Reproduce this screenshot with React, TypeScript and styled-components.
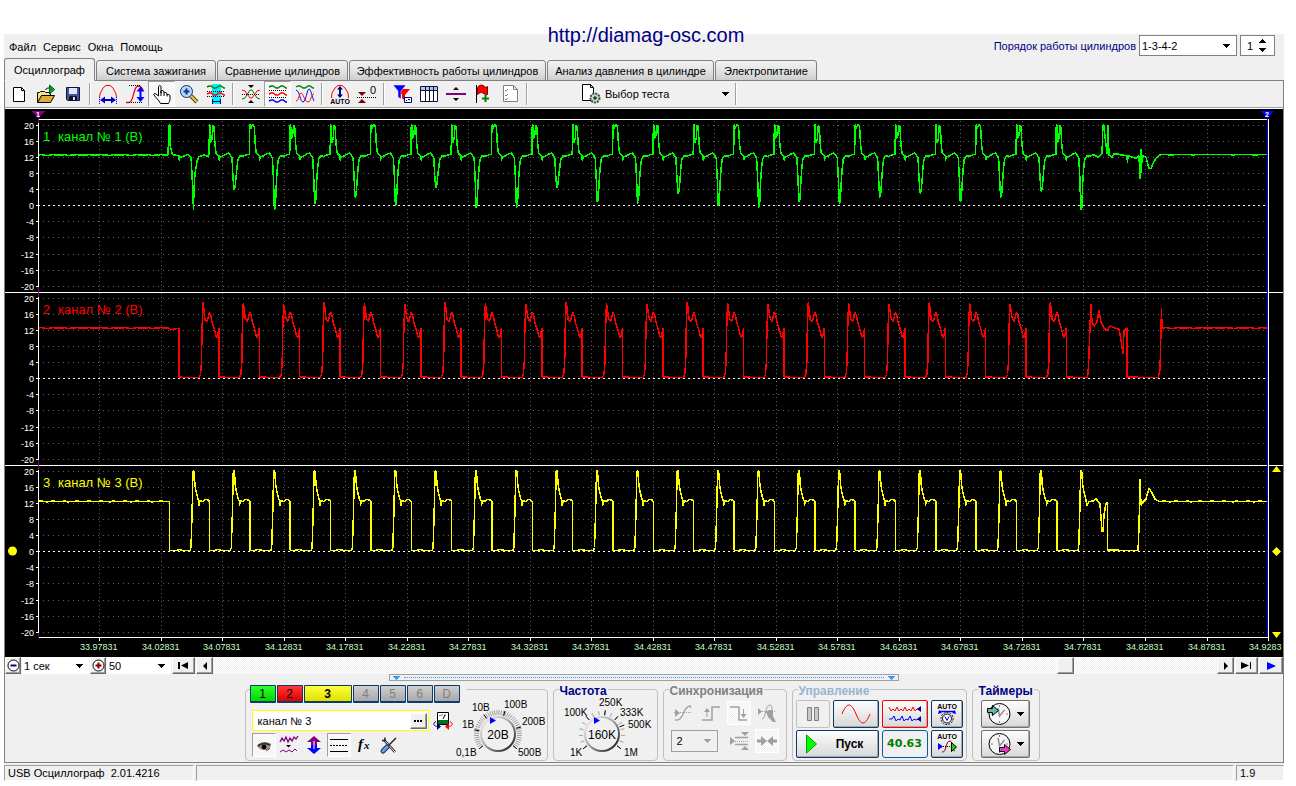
import React from "react";
import styled, { createGlobalStyle, css } from "styled-components";

const GlobalStyle = createGlobalStyle`
  * { box-sizing: border-box; }
  body {
    margin: 0;
    background: #fff;
    color: #000;
    font: 11px/14px "Liberation Sans", Arial, sans-serif;
  }
  button, input, select { font: inherit; color: inherit; margin: 0; padding: 0; }
  svg { display: block; flex: none; }
`;

const dither = "repeating-conic-gradient(#fff 0 25%, #f0f0f0 0 50%) 0 0 / 2px 2px";

/* ---------- page frame ---------- */

const Page = styled.div`
  position: relative;
  padding: 34px 12px 5px 4px;
`;

const SiteLink = styled.a`
  position: absolute;
  top: 23px;
  left: 0;
  right: 4px;
  text-align: center;
  font-size: 20px;
  line-height: 24px;
  color: #000080;
  text-decoration: none;
  pointer-events: none;
`;

const Window = styled.main`
  background: #f0f0f0;
`;

const MenuBar = styled.header`
  display: flex;
  align-items: flex-start;
  justify-content: space-between;
  height: 24px;
  padding: 1px 9px 0 5px;
`;

const Menu = styled.nav`
  display: flex;
  gap: 7px;
  padding-top: 5px;
`;

const MenuItem = styled.button`
  border: 0;
  background: none;
`;

const Order = styled.div`
  display: flex;
  align-items: center;
  gap: 3px;
`;

const OrderLabel = styled.label`
  color: #000080;
`;

/* ---------- select with drawn arrow ---------- */

const SelectBox = styled.span<{ $w: number; $h: number; $framed?: boolean; $muted?: boolean }>`
  display: flex;
  align-items: center;
  width: ${(p) => p.$w}px;
  height: ${(p) => p.$h}px;
  padding-right: 6px;
  background: ${(p) => (p.$muted ? "#f0f0f0" : "#fff")};
  border: ${(p) => (p.$framed ? `1px solid ${p.$muted ? "#a0a0a0" : "#808080"}` : "0")};
  select {
    flex: 1;
    min-width: 0;
    height: 100%;
    padding-left: ${(p) => (p.$muted ? 5 : 2)}px;
    border: 0;
    background: none;
    appearance: none;
  }
`;

const Spinner = styled.div`
  display: flex;
  width: 35px;
  height: 21px;
  border: 1px solid #808080;
  background: #fff;
  input {
    width: 18px;
    border: 0;
    background: none;
    text-align: center;
  }
`;

const SpinButtons = styled.div`
  display: flex;
  flex-direction: column;
  justify-content: center;
  gap: 4px;
  width: 13px;
  button { display: block; border: 0; background: none; height: 5px; }
`;

/* ---------- tabs ---------- */

const Tabs = styled.div`
  display: flex;
  align-items: flex-end;
  gap: 1px;
  height: 23px;
  background: linear-gradient(#808080, #808080) bottom / 100% 1px no-repeat;
`;

const Tab = styled.button<{ $w: number; $active?: boolean }>`
  width: ${(p) => p.$w}px;
  height: ${(p) => (p.$active ? 23 : 21)}px;
  border: 1px solid #808080;
  border-bottom-color: ${(p) => (p.$active ? "#f0f0f0" : "#808080")};
  border-radius: 3px 3px 0 0;
  background: ${(p) => (p.$active ? "#f0f0f0" : "linear-gradient(#f2f2f2, #e4e4e4 50%, #cdcdcd)")};
  white-space: nowrap;
`;

const Frame = styled.section`
  border: 1px solid #808080;
  border-top: 0;
`;

const Toolbar = styled.div`
  display: flex;
  height: 28px;
  border-bottom: 1px solid #fff;
  box-shadow: inset 0 -1px #a0a0a0;
`;

const ToolButton = styled.button<{ $pressed?: boolean; $size?: number }>`
  display: flex;
  align-items: center;
  justify-content: center;
  width: ${(p) => p.$size ?? 27}px;
  height: ${(p) => (p.$size ? 24 : 26)}px;
  border: 0;
  background: none;
  ${(p) =>
    p.$pressed &&
    css`
      background: ${dither};
      border: 1px solid;
      border-color: #a0a0a0 #fff #fff #a0a0a0;
      &:disabled { border-color: #fff; }
    `}
`;

const Separator = styled.span`
  width: 8px;
  height: 22px;
  margin-top: 2px;
  background: linear-gradient(90deg, #a0a0a0 1px, #fff 1px) 3px 0 / 2px 100% no-repeat;
`;

const TestButton = styled.button`
  display: flex;
  align-items: center;
  gap: 4px;
  width: 201px;
  height: 26px;
  padding: 0 0 0 50px;
  border: 0;
  background: none;
  span { flex: 0 0 113px; text-align: left; }
`;

const ScopeSvg = styled.svg`
  width: 100%;
  height: auto;
  background: #000;
`;

/* ---------- time navigation ---------- */

const NavRow = styled.div`
  display: flex;
  gap: 1px;
  height: 17px;
`;

const NavButton = styled.button<{ $w: number }>`
  display: flex;
  flex: none;
  align-items: center;
  justify-content: center;
  width: ${(p) => p.$w}px;
  border: 1px solid;
  border-color: #fff #696969 #696969 #fff;
  box-shadow: inset -1px -1px #a0a0a0;
  background: #f0f0f0;
`;

const Track = styled.div`
  flex: 1;
  display: flex;
  justify-content: flex-end;
  padding-right: 142px;
  background: ${dither};
`;

const SplitterRow = styled.div`
  display: flex;
  justify-content: center;
`;

const Splitter = styled.button`
  display: flex;
  align-items: center;
  justify-content: space-between;
  width: 510px;
  height: 7px;
  padding: 0 3px;
  border: 1px solid #a0a0a0;
  background: #f0f0f0;
  i {
    flex: 1;
    margin: 0 4px;
    border-top: 1px dotted #3399ff;
  }
`;

/* ---------- control groups ---------- */

const Controls = styled.div`
  display: flex;
  justify-content: center;
  gap: 5px;
  padding: 8px 4px 1px 0;
`;

const Group = styled.section<{ $w: number }>`
  position: relative;
  width: ${(p) => p.$w}px;
  height: 72px;
  border: 1px solid #c0c0c0;
  border-radius: 4px;
`;

const GroupTitle = styled.h2<{ $color?: string }>`
  position: absolute;
  top: -6px;
  left: 5px;
  margin: 0;
  padding: 0 1px;
  background: #f0f0f0;
  color: ${(p) => p.$color ?? "#000080"};
  font-size: 12px;
  line-height: 14px;
`;

const ChannelGroup = styled(Group)`
  display: flex;
`;

const ChannelSide = styled.div`
  flex: none;
  width: 207px;
  padding-left: 4px;
  margin-top: -5px;
`;

const ChannelTabs = styled.div`
  display: flex;
  gap: 1px;
  width: 216px;
  background: #f0f0f0;
`;

const ChannelButton = styled.button<{ $from: string; $to: string; $wide?: boolean; $off?: boolean }>`
  width: ${(p) => (p.$wide ? 48 : 26)}px;
  height: 18px;
  border: 1px solid #0b3a6b;
  border-bottom-width: 2px;
  border-radius: 1px;
  background: linear-gradient(${(p) => p.$from}, ${(p) => p.$to});
  color: ${(p) => (p.$off ? "#808080" : "#000")};
  font-size: 12px;
  line-height: 14px;
  font-weight: ${(p) => (p.$wide ? 700 : 400)};
`;

const NameRow = styled.div`
  display: flex;
  align-items: center;
  gap: 4px;
  margin: 7px 0 0 2px;
`;

const NameField = styled.div`
  display: flex;
  flex: none;
  align-items: center;
  width: 177px;
  height: 21px;
  border: 1px solid #ffff00;
  padding-right: 1px;
  background: #fff;
  input { flex: 1; min-width: 0; height: 17px; margin-left: 5px; border: 0; background: none; outline: 0; }
`;

const SmallTools = styled.div`
  display: flex;
  gap: 1px;
  margin: 2px 0 0 2px;
`;

const SyncGrid = styled.div`
  display: grid;
  grid-template-columns: repeat(4, 28px);
  gap: 4px 0;
  padding: 11px 0 0 5px;
  justify-items: center;
  align-items: center;
`;

const SyncSelect = styled.div`
  grid-column: span 2;
  justify-self: start;
  padding-left: 2px;
`;

const ControlGrid = styled.div`
  display: grid;
  grid-template-columns: 34px 46px 46px 32px;
  gap: 2px 3px;
  padding: 10px 0 0 3px;
`;

const PushButton = styled.button<{ $edge?: string; $span?: number; $flat?: boolean }>`
  display: flex;
  align-items: center;
  justify-content: center;
  grid-column: span ${(p) => p.$span ?? 1};
  height: 28px;
  border: 1px solid ${(p) => p.$edge ?? "#0b3a6b"};
  border-radius: 2px;
  background: ${(p) => (p.$flat ? "#f0f0f0" : "linear-gradient(#fdfdfd, #eaeaea 50%, #d8d8d8)")};
  box-shadow: ${(p) => (p.$flat ? "none" : "inset -1px -1px #a8a8a8")};
`;

const StartLabel = styled.b`
  width: 52px;
  padding-left: 14px;
  font-size: 12px;
`;

const Rate = styled.output`
  display: flex;
  align-items: center;
  justify-content: center;
  height: 28px;
  border: 1px solid #0a5a9c;
  border-radius: 3px;
  color: #008000;
  font: 700 11px/14px "DejaVu Sans", Verdana, sans-serif;
`;

const TimerStack = styled.div`
  display: grid;
  gap: 2px;
  width: 57px;
  padding: 10px 0 0 8px;
  button { gap: 5px; border-color: #707070; }
`;

/* ---------- status bar ---------- */

const StatusBar = styled.footer`
  display: flex;
  gap: 2px;
  padding-top: 2px;
`;

const StatusPane = styled.div<{ $w?: number }>`
  flex: ${(p) => (p.$w ? `0 0 ${p.$w}px` : "1")};
  height: 16px;
  padding-left: 3px;
  border: 1px solid #a0a0a0;
  border-right-color: #fff;
  border-bottom-color: #fff;
  line-height: 15px;
  white-space: pre;
`;

/* ---------- small drawings ---------- */

const Down = ({ fill = "#000" }: { fill?: string }) => (
  <svg width="7" height="4" shapeRendering="crispEdges"><path d="M0 0h7L3.5 4z" fill={fill} /></svg>
);
const Up = () => (
  <svg width="7" height="4" shapeRendering="crispEdges"><path d="M0 4h7L3.5 0z" /></svg>
);

const Icon = ({ children, size = 20, line = "#000" }: { children: React.ReactNode; size?: number; line?: string }) => (
  <svg width={size} height={size} viewBox={`0 0 ${size} ${size}`} fill="none" stroke={line} strokeWidth="1">
    {children}
  </svg>
);

const Tiny = ({ x, y, children, fill = "#000" }: { x: number; y: number; children: React.ReactNode; fill?: string }) => (
  <text x={x} y={y} fontSize="7" fontWeight="700" textAnchor="middle" fill={fill} stroke="none">{children}</text>
);

const NewIcon = () => (
  <Icon><path d="M4.500 3.500h8l3 3v11h-11zM12.500 3.500v3h3" fill="#fff" /></Icon>
);
const OpenIcon = () => (
  <Icon>
    <path d="M1.500 18.500v-10h2l1-1h4l1 1h5v3" fill="#f4e27a" />
    <path d="M1.500 18.500l4-7h13l-4 7z" fill="#d9ae3c" />
    <path d="M9.500 6c1-2 2-2 4-2" />
    <path d="M13.500 1l5 4.500-5 4.500z" fill="#00a030" stroke="#006020" />
  </Icon>
);
const SaveIcon = () => (
  <Icon line="#101040">
    <path d="M3.500 3.500h13v13h-12l-1-1z" fill="#44549c" />
    <path d="M6 4h8v6H6z" fill="#dfe8f6" stroke="none" />
    <path d="M6.500 12.500h7v4h-7z" fill="#111" />
    <path d="M10 13h2v3h-2z" fill="#ddd" stroke="none" />
  </Icon>
);
const PeriodIcon = () => (
  <Icon>
    <path d="M1.500 14L2 10l3-6 3-2.500h4L15 4l3 6 .5 4" stroke="#f00" />
    <path d="M1.500 13v7M18.500 13v7" stroke="#00f" strokeDasharray="1 1" />
    <path d="M2 16l5-3.500v7zM18 16l-5-3.500v7z" fill="#00c" stroke="none" />
    <path d="M5 16h10" stroke="#00c" strokeWidth="2" />
  </Icon>
);
const AmplitudeIcon = () => (
  <Icon>
    <path d="M1 18.500h3c5 0 4-16 9-16.500 3 0 4 2 5 4" stroke="#f00" strokeWidth="1.300" />
    <path d="M4 1.500h12M4 18.500h14" strokeDasharray="1 1" />
    <path d="M15.500 6v9" stroke="#00f" strokeWidth="2" />
    <path d="M15.500 2.500l4 5h-8zM15.500 18l4-5h-8z" fill="#00f" stroke="none" />
  </Icon>
);
const HandIcon = () => (
  <Icon>
    <path d="M6.500 12V3c0-2 2.500-2 2.500 0V9V7c1-1 3-.5 3 1V9c1-1 3-.5 3 1v1c1-1 3-.5 3 1v3c0 2-1 3-1.500 4.500H8.500C7 16 4 14 2 11c-.500-1.500 1-2 2-1z" fill="#fff" />
    <path d="M9 8v4M12 9v3M15 10.500v2" />
  </Icon>
);
const ZoomIcon = () => (
  <Icon>
    <path d="M12 12l6 6" stroke="#5a4210" strokeWidth="4" />
    <path d="M12 12l6 6" stroke="#f0c850" strokeWidth="2" />
    <circle cx="7.500" cy="7.500" r="6" fill="#b8d8f8" stroke="#103070" />
    <path d="M4.500 7.500h6M7.500 4.500v6" stroke="#103090" strokeWidth="2" />
  </Icon>
);
const wave = (y: number) => `M1 ${y}l2 -1h2l3 2h2l3 -2h2l3 2h1`;
const CursorIcon = () => (
  <Icon>
    <path d="M6 0h9v20H6z" fill="#00f0ff" stroke="none" />
    <path d={wave(3)} stroke="#008000" strokeWidth="1.500" />
    <path d="M1 7.500h18M1 12.500h18" strokeDasharray="1 1" />
    <path d={wave(10)} stroke="#f00" strokeWidth="1.500" />
    <path d="M7 17.500h7M6.500 15v5M14.500 15v5" stroke="#000080" />
  </Icon>
);
const CompressIcon = () => (
  <Icon>
    <path d="M1 15l3-1 5-8h2l5 8 3 1" stroke="#008000" />
    <path d="M1 6l3 1 5 7h2l5-7 3-1" stroke="#f00" />
    <path d="M1 10.500h18" strokeDasharray="1 1" />
    <path d="M7 1h6l-3 3zM7 19h6l-3-3z" fill="#000" stroke="none" />
  </Icon>
);
const StackedIcon = () => (
  <Icon>
    <path d={wave(3)} stroke="#008000" strokeWidth="1.500" />
    <path d="M1 6.500h18M1 13.500h18" strokeDasharray="1 1" />
    <path d={wave(10)} stroke="#f00" strokeWidth="1.500" />
    <path d={wave(17)} stroke="#00f" strokeWidth="1.500" />
  </Icon>
);
const OverlayIcon = () => (
  <Icon>
    <path d={wave(3)} stroke="#008000" strokeWidth="1.300" />
    <path d="M1 6c4 1 4 12 7 12S12 5 14 5s3 8 5 12" stroke="#00f" />
    <path d="M1 17c3 0 3-8 5-8s4 9 7 9 3-8 6-8" stroke="#f00" />
  </Icon>
);
const AutoIcon = () => (
  <Icon>
    <path d="M1.500 14L2 9l3-5 3-2.500h4L15 4l3 5 .5 5" stroke="#f00" />
    <path d="M10 4v8" stroke="#000080" strokeWidth="2" />
    <path d="M10 2l3 3.500H7zM10 14l3-3.500H7z" fill="#000080" stroke="none" />
    <Tiny x={10} y={20}>AUTO</Tiny>
  </Icon>
);
const ZeroIcon = () => (
  <Icon>
    <path d="M1 8h8l-4 4zM1 19h8l-4-4z" fill="#800000" stroke="none" />
    <path d="M0 13.500h20" strokeDasharray="1 1" />
    <text x="13" y="10" fontSize="11" fill="#000" stroke="none">0</text>
  </Icon>
);
const FilterIcon = () => (
  <Icon>
    <path d="M5 5h13l-5 6v6l-3-3v-3z" fill="#f00" stroke="none" />
    <path d="M1 1h13l-5 6v8l-3-2V7z" fill="#00f" stroke="#f0f0f0" strokeWidth=".500" />
    <path d="M12.500 13.500h7v5h-7z" fill="#fff" stroke="#000080" />
    <path d="M14 16.500h1M16 15.500h2" stroke="#000080" />
  </Icon>
);
const TableIcon = () => (
  <Icon line="#101030">
    <path d="M1.500 2.500h17v15h-17z" fill="#fff" />
    <path d="M2 3h16v3H2z" fill="#a8c8f0" stroke="none" />
    <path d="M1 6.500h18M6.500 3v14M10.500 3v14M14.500 3v14" />
  </Icon>
);
const SplitIcon = () => (
  <Icon>
    <path d="M0 10h20" stroke="#800080" strokeWidth="2" />
    <path d="M7 6h6l-3-3zM7 14h6l-3 3z" fill="#000" stroke="none" />
  </Icon>
);
const FlagIcon = () => (
  <Icon>
    <path d="M3.500 1v18" />
    <path d="M4.500 3.500c2-3 5-3 7-1 1 1 2 1 3 0v8c-3 1-4-2-6-2-1 0-3 1-4 2z" fill="#f00" stroke="#700" />
    <path d="M9 14.500h7M12.500 11v7" stroke="#008000" strokeWidth="2" />
  </Icon>
);
const ChecklistIcon = () => (
  <Icon line="#808080">
    <path d="M3.500 1.500h10l4 4v12h-14zM13.500 1.500v4h4" fill="#fff" />
    <path d="M5 6l1 1 2-2M5 11l1 1 2-2M5 15l1 1 2-2" />
  </Icon>
);
const TestIcon = () => (
  <svg width="20" height="20" viewBox="0 0 20 20" fill="none" stroke="#000">
    <path d="M1.500 .5h8l3 3v13h-11zM9.500 .5v3h3" fill="#fff" />
    <circle cx="14" cy="14" r="4.500" fill="#c8dcc8" stroke="#405040" strokeWidth="2" strokeDasharray="2 1" />
    <path d="M12 14h4M14 12v4" />
  </svg>
);

const EyeIcon = () => (
  <Icon>
    <path d="M3 11C6 6 13 6 17 9c0 4-3 6-7 6-3 0-5-1-7-4z" fill="#a09890" stroke="none" />
    <path d="M4 11c3-3 8-3 12-1" strokeWidth="2" stroke="#333" />
    <circle cx="10" cy="12" r="2" fill="#000" />
    <path d="M12 15c2 0 3-1 4-2" stroke="#400" />
  </Icon>
);
const SmoothIcon = () => (
  <Icon line="#800080">
    <path d="M1 7l2-4 2 3 2-4 2 5 2-4 2 3 2-4 2 2 2-3" strokeWidth="1.300" />
    <path d="M1 17l3-2 3 2 3-2 3 2 3-3 2 2" />
    <path d="M7 10h5l-2.500 2.500z" fill="#000" stroke="none" />
  </Icon>
);
const MoveIcon = () => (
  <Icon>
    <path d="M10 1l7 6h-4v3H7V7H3z" fill="#800080" stroke="none" />
    <path d="M10 19l7-6h-4v-3H7v3H3z" fill="#00f" stroke="none" />
    <path d="M10 6v8" stroke="#fff" strokeWidth="1" />
  </Icon>
);
const LinesIcon = () => (
  <Icon><path d="M1 4.500h18M1 16.500h18" /><path d="M1 10.500h18" strokeDasharray="2 1" /></Icon>
);
const FxIcon = () => (
  <Icon>
    <text x="4" y="14" fontSize="15" fontWeight="700" fontStyle="italic" fontFamily="Liberation Serif, serif" fill="#000" stroke="none">f</text>
    <text x="10" y="14" fontSize="11" fontWeight="700" fontStyle="italic" fontFamily="Liberation Serif, serif" fill="#000" stroke="none">x</text>
  </Icon>
);
const ToolsIcon = () => (
  <Icon>
    <path d="M5 5l11 12" stroke="#222" strokeWidth="2.500" />
    <path d="M5 5l11 12" stroke="#e8e8e8" />
    <path d="M3 5.500h3v-3" stroke="#222" strokeWidth="1.500" />
    <path d="M17 3L9 11" stroke="#222" strokeWidth="1.500" />
    <path d="M8 12l-4 4" stroke="#103070" strokeWidth="5" strokeLinecap="round" />
    <path d="M8 12l-4 4" stroke="#78a0d8" strokeWidth="3" strokeLinecap="round" />
  </Icon>
);
const SensorIcon = () => (
  <Icon>
    <path d="M4.500 1.500h11v12h-11z" fill="#fff" />
    <path d="M5 9h10v4H5z" fill="#007020" stroke="none" />
    <path d="M7 4v1M9 3.500v1M12 3.500v1M10 8l2-4" />
    <path d="M3 10.500c-4 2-2 5 2 5" stroke="#000080" />
    <path d="M17 10.500c4 2 2 5-2 5" stroke="#f00" />
    <path d="M16 12v7l-4-3.500z" fill="#f00" stroke="none" />
    <path d="M4 12v7l4-3.500z" fill="#000080" stroke="none" />
  </Icon>
);

const grey = "#a0a0a0";
const SyncSineIcon = () => (
  <Icon line={grey}>
    <path d="M2 6v8l5-4z" fill={grey} stroke="none" />
    <path d="M1 9.500h18" strokeDasharray="1 1" />
    <path d="M2 17c9 2 7-13 15-14l1 2" strokeWidth="1.300" />
  </Icon>
);
const SyncRiseIcon = () => (
  <Icon line={grey}>
    <path d="M1 17h10V4h8" strokeWidth="1.500" />
    <path d="M6 7v7" /><path d="M6 5l3 4H3z" fill={grey} stroke="none" />
  </Icon>
);
const SyncFallIcon = () => (
  <Icon line={grey}>
    <path d="M1 4h9v13h8" strokeWidth="1.500" />
    <path d="M14.500 6v7" /><path d="M14.500 15l3-4h-6z" fill={grey} stroke="none" />
  </Icon>
);
const SyncHandIcon = () => (
  <Icon line={grey}>
    <path d="M1 5v7l4-3.500zM9 9l3-2h4v6l3 6h-3l-5-5z" fill={grey} stroke="none" />
    <path d="M1 8.500h18" strokeDasharray="1 1" />
    <path d="M5 16C9 16 8 2 13 2c2 0 2 3 2 6" />
  </Icon>
);
const SyncLevelIcon = () => (
  <Icon line={grey}>
    <path d="M1 6v8l5-4zM12 1h8l-4 4zM12 19h8l-4-4z" fill={grey} stroke="none" />
    <path d="M6 6.500h13M6 13.500h13" strokeWidth="1.500" />
    <path d="M2 10.500h17" strokeDasharray="1 1" />
  </Icon>
);
const SyncMeetIcon = () => (
  <Icon line={grey}>
    <path d="M0 10h5M15 10h5" strokeWidth="3" />
    <path d="M4 5v10l6-5zM16 5v10l-6-5z" fill={grey} stroke="none" />
  </Icon>
);

const Clock = ({ arrow }: { arrow: "in" | "out" }) => (
  <svg width="26" height="24" viewBox="0 0 26 24" fill="none" stroke="#000">
    <circle cx="13.500" cy="12" r="10.500" fill="#f6f6f6" />
    <path d="M13.500 3v2M13.500 19v2M5 12h2M20 12h2" stroke="#808080" />
    <path d="M12 6l1.500 8 5-6" stroke="#909090" strokeWidth="1.500" />
    {arrow === "in" ? (
      <path d="M1.500 6.500h5v-3l6 5-6 5v-3h-5z" fill="#5cb8b0" />
    ) : (
      <path d="M13.500 15.500h5v-3l6 5-6 5v-3h-5z" fill="#e838c8" />
    )}
  </svg>
);

/* ---------- oscilloscope ---------- */

type Pt = [number, number];

const LEFT = 33;
const RIGHT = 1262;
const PERIOD = 40.35;
const VOLT = 4.03;
const TICKS = [20, 16, 12, 8, 4, 0, -4, -8, -12, -16, -20];
const TICK_DY = [-80, -64, -48, -32, -16, 0, 16, 32, 49, 65, 81];

const flat = (x0: number, x1: number, v: number): Pt[] => {
  const out: Pt[] = [];
  for (let x = x0, i = 0; x < x1; x += 3, i++) out.push([x, v + (i % 4 === 1 ? 0.12 : i % 7 === 3 ? -0.1 : 0)]);
  out.push([x1, v]);
  return out;
};
const shift = (pts: Pt[], dx: number): Pt[] => pts.map(([x, v]) => [x + dx, v]);

const DIPS = [4, -1, 0.5, 2, 0, 4.5, -0.5, -0.5, 4.5, 1, 0.5, 3, 0, -0.5, 1, 0.5, 2, 3, 1, 2, 3.5];

const greenWave = (): Pt[] => {
  const pts: Pt[] = [
    ...flat(LEFT, 163, 12.5), [164, 20], [165, 20], [165, 15], [167, 13], [169, 12.5],
    [174, 12.4], [174, 11.2], [175, 12], [180, 12.3], [183, 12.7], [186, 12], [187, 8], [188, 2], [188.5, -1],
    [189, 4], [190, 8], [192, 11], [194, 12.1], [199, 12.5], [203, 12.2],
  ];
  for (let k = 0; k < 22; k++) {
    const notch = k % 3 === 1 ? 19 : k % 3 === 0 ? 15.5 : 16.5;
    const dip = k === 21 ? -1 : DIPS[k];
    pts.push(...shift([
      [204, 12.6], [204.5, 20], [205, 20], [205.5, notch], [207, notch + 1], [208, 20], [209, 19.5], [210, 15],
      [211, 13], [213, 12.5], [214, 12.3], [214, 11.2], [215, 12], [218, 12.3], [222, 12.9], [224, 13], [226, 12.2],
      [227, 11.8], [228, 7], [229, dip], [230, dip + 0.5], [231, Math.max(dip + 3, 6)], [232, 9.5], [233, 11.5],
      [235, 12.3], [238, 12.2], [242, 12.6],
    ], k * PERIOD - (k === 21 ? 0.5 : 0)));
  }
  pts.push(
    [1093, 12], [1096, 12.7], [1097, 13], [1098, 20], [1099, 20], [1100, 17], [1102, 13], [1103, 12.8], [1103, 20], [1104, 12.5],
    [1107, 12], [1109, 12.8], [1112, 12.8], [1117, 12.5], [1122, 12.4], [1122.5, 10.5], [1123, 12.4], [1127, 12], [1131, 11.7], [1134, 12.3],
    [1135, 6.5], [1136, 14], [1136.5, 8], [1137, 12.5], [1141, 12], [1144, 9.2], [1146, 9.2], [1149, 11], [1153, 12.2], [1156, 12.7],
    ...flat(1157, RIGHT, 12.6),
  );
  return pts;
};

const redWave = (): Pt[] => {
  const pts: Pt[] = [...flat(LEFT, 164, 12.5), [165, 12], [169, 12.3], [174, 12.4], [174, 0.4], [180, 0.2]];
  for (let k = 0; k < 22; k++) {
    const v = (k % 3) * 0.3;
    pts.push(...shift([
      [188, 0.3], [194, 0.2], [195.5, 1], [196.5, 4], [197, 12], [198, 19 - v], [199, 17], [200, 14.5 + v], [202, 14.2], [203, 15],
      [204.5, 16.5], [206, 15.5], [207, 14], [209, 12.5], [211, 10.5], [212, 10.1], [213, 11], [214, 12.6], [214, 0.4], [218, 0.4], [223, 0.2],
    ], k * PERIOD));
  }
  pts.push(
    [1082, 0.2], [1083, 1], [1084, 6], [1085, 13], [1086, 18.5], [1087, 14], [1089, 13], [1092, 14], [1094, 17], [1096, 14], [1099, 12.5],
    [1102, 11.8], [1105, 13], [1109, 12.6], [1114, 12.2], [1116, 9.5], [1118, 6], [1119, 11.5], [1121, 12.5], [1122, 12.5], [1122, 0.3],
    [1130, 0.4], [1136, 0.2], [1153, 0.2], [1155, 2], [1156, 12], [1156.5, 17.5], [1157, 12.5], ...flat(1158, RIGHT, 12.5),
  );
  return pts;
};

const yellowWave = (): Pt[] => {
  const pts: Pt[] = [...flat(LEFT, 164.5, 12.4), [164.5, 0.3], [170, 0.2], [175, 0.5]];
  for (let k = 0; k < 23; k++) {
    pts.push(...shift([[178, 0.2], [185, 0.2], [186, 1], [187, 9], [188, 20], [189, 20], [190, 16.5], [191, 15], [193, 13]], k * PERIOD));
    if (k < 22) {
      pts.push(...shift([
        [194, 12.5], [194, 11.3], [195, 12.6], [198, 12.4], [200, 12.9], [203, 12.8], [204.5, 12.4], [204.5, 0.3], [208, 0.2], [213, 0.5],
      ], k * PERIOD));
    }
  }
  pts.push(
    [1081, 12.5], [1082, 11.3], [1084, 12.4], [1088, 12.5], [1091, 13.1], [1095, 11.8], [1097, 5], [1098, 5], [1099, 9], [1101, 12],
    [1102.5, 12], [1102.5, 0.4], [1110, 0.4], [1118, 0.2], [1133, 0.2], [1134, 6], [1135, 18], [1136, 11.5], [1138, 12.3], [1141, 13],
    [1144, 15.7], [1146, 15], [1150, 13], [1154, 12.4], ...flat(1156, RIGHT, 12.4),
  );
  return pts;
};

const toPath = (pts: Pt[], zero: number) =>
  pts.map(([x, v], i) => `${i ? "L" : "M"}${x.toFixed(1)} ${(zero + 0.5 - v * VOLT).toFixed(1)}`).join("");

const CHANNELS = [
  { no: 1, zero: 96, color: "#00ff00", pts: greenWave() },
  { no: 2, zero: 269, color: "#ff0000", pts: redWave() },
  { no: 3, zero: 442, color: "#ffff00", pts: yellowWave() },
];

const Channel = ({ no, zero, color, pts }: (typeof CHANNELS)[number]) => (
  <g>
    {TICKS.map((t, i) => {
      const y = zero + TICK_DY[i] + 0.5;
      return (
        <g key={t}>
          {t === 0 ? (
            <path d={`M${LEFT} ${y}H${RIGHT}`} stroke="#fff" strokeDasharray="2 3" />
          ) : (
            <path d={`M${LEFT} ${y}H${RIGHT}`} stroke="#606060" strokeDasharray="1 4" />
          )}
          <path d={`M31 ${y}h3`} stroke="#fff" />
          <text x="29" y={y + 3} fontSize="9" textAnchor="end" fill="#fff">{t}</text>
        </g>
      );
    })}
    <path d={toPath(pts, zero)} fill="none" stroke={color} strokeWidth="1.5" strokeLinejoin="bevel" />
    <text x="38" y={zero - 64} fontSize="13" fill={color}>{no}</text>
    <text x="53" y={zero - 64} fontSize="13" fill={color}>канал № {no} (В)</text>
  </g>
);

const TIMES = Array.from({ length: 20 }, (_, k) => ({
  x: Math.round(94 + k * 61.53),
  label: (33.97831 + k * 0.05).toFixed(5).slice(0, k === 19 ? 7 : 8),
}));

const Scope = () => (
  <ScopeSvg viewBox="0 0 1278 548" role="img" aria-label="Осциллограмма" shapeRendering="crispEdges">
    {TIMES.map(({ x, label }) => (
      <g key={label}>
        <path d={`M${x + 0.5} 12V528`} stroke="#606060" strokeDasharray="1 3" />
        <path d={`M${x + 0.5} 529v3`} stroke="#fff" />
        <text x={x - 19} y="541" fontSize="9" fill="#c0ffc0">{label}</text>
      </g>
    ))}
    {CHANNELS.map((c) => <Channel key={c.no} {...c} />)}
    <path d="M33 10.500h1231M0 183.500h1278M0 356.500h1278M33 528.500h1231M33.500 10v519M1263.500 10v519" stroke="#fff" />
    <path d="M33.500 8v6M33.500 178v10M33.500 351v10M33.500 524v5" stroke="#800080" />
    <path d="M1262.500 8v520" stroke="#0000ff" />
    <path d="M26 2h15l-7.500 7z" fill="#800080" />
    <path d="M1255 2h15l-7.500 7z" fill="#0000ff" />
    <text x="33" y="8" fontSize="7" fontWeight="700" textAnchor="middle" fill="#fff">1</text>
    <text x="1262" y="8" fontSize="7" fontWeight="700" textAnchor="middle" fill="#fff">2</text>
    <g fill="#ffff00" shapeRendering="auto">
      <circle cx="7.500" cy="442" r="4.500" />
      <path d="M1267 363h9l-4.500-6zM1267 523h9l-4.500 6zM1267 442.500l4.500-4.500 4.500 4.500-4.500 4.500z" />
    </g>
  </ScopeSvg>
);

/* ---------- rotary knob ---------- */

interface DialProps {
  width: number;
  cx: number;
  title: string;
  value: string;
  ticks: number;
  ring: number;
  marks: { x: number; y: number; t: string; a: number }[];
}

const polar = (cx: number, cy: number, r: number, deg: number) => {
  const a = (deg * Math.PI) / 180;
  return `${(cx + r * Math.cos(a)).toFixed(1)} ${(cy + r * Math.sin(a)).toFixed(1)}`;
};

const Dial = ({ width, cx, title, value, ticks, ring, marks }: DialProps) => {
  const cy = 44;
  const id = `knob-${ticks}`;
  return (
    <svg width={width} height="70" viewBox={`0 0 ${width} 70`} role="img" aria-label={title}>
      <defs>
        <linearGradient id={id} x1="0" y1="0" x2="1" y2="1">
          <stop offset="0" stopColor="#fff" />
          <stop offset=".5" stopColor="#a0a0a0" />
          <stop offset="1" stopColor="#000" />
        </linearGradient>
      </defs>
      {Array.from({ length: ticks }, (_, i) => {
        const a = 142 + (i * 256) / (ticks - 1);
        return <path key={i} d={`M${polar(cx, cy, 19, a)}L${polar(cx, cy, ring, a)}`} stroke="#a0a0a0" />;
      })}
      {marks.map((m) => (
        <g key={m.t}>
          <path d={`M${polar(cx, cy, 19, m.a)}L${polar(cx, cy, 24, m.a)}`} stroke="#000" />
          <text x={m.x} y={m.y} fontSize="10">{m.t}</text>
        </g>
      ))}
      <circle cx={cx} cy={cy} r="18" fill={`url(#${id})`} />
      <circle cx={cx} cy={cy} r="16" fill="#f0f0f0" />
      <path d={`M${cx - 8} ${cy - 17}v7l6-3.500z`} fill="#0000ff" />
      <text x={cx} y={cy + 5} fontSize="12" textAnchor="middle">{value}</text>
    </svg>
  );
};

const VOLT_MARKS = [
  { x: 3, y: 66, t: "0,1В", a: 142 }, { x: 9, y: 38, t: "1В", a: 190 }, { x: 19, y: 21, t: "10В", a: 234 },
  { x: 51, y: 18, t: "100В", a: 287 }, { x: 69, y: 35, t: "200В", a: 343 }, { x: 65, y: 66, t: "500В", a: 38 },
];
const FREQ_MARKS = [
  { x: 16, y: 66, t: "1K", a: 142 }, { x: 10, y: 26, t: "100K", a: 228 }, { x: 45, y: 16, t: "250K", a: 278 },
  { x: 66, y: 26, t: "333K", a: 312 }, { x: 74, y: 38, t: "500K", a: 338 }, { x: 70, y: 66, t: "1M", a: 38 },
];

const CHANNEL_BUTTONS = [
  { t: "1", from: "#30ff30", to: "#00d800" },
  { t: "2", from: "#ff3838", to: "#e00000" },
  { t: "3", from: "#ffff40", to: "#e0e000", wide: true },
  ...["4", "5", "6", "D"].map((t) => ({ t, from: "#d0d0d0", to: "#a8a8a8", off: true, wide: false })),
] as { t: string; from: string; to: string; wide?: boolean; off?: boolean }[];

const TABS: [string, number][] = [
  ["Осциллограф", 91], ["Система зажигания", 120], ["Сравнение цилиндров", 131],
  ["Эффективность работы цилиндров", 197], ["Анализ давления в цилиндре", 167], ["Электропитание", 102],
];

const TOOLS: (null | { name: string; icon: React.ReactNode; pressed?: boolean })[] = [
  { name: "Новый", icon: <NewIcon /> }, { name: "Открыть", icon: <OpenIcon /> }, { name: "Сохранить", icon: <SaveIcon /> },
  null,
  { name: "Период", icon: <PeriodIcon /> }, { name: "Амплитуда", icon: <AmplitudeIcon /> },
  { name: "Перемещение", icon: <HandIcon />, pressed: true }, { name: "Масштаб", icon: <ZoomIcon /> }, { name: "Линейки", icon: <CursorIcon /> },
  null,
  { name: "Сжать", icon: <CompressIcon /> }, { name: "Раздельно", icon: <StackedIcon />, pressed: true }, { name: "Совместно", icon: <OverlayIcon /> },
  null,
  { name: "Авто", icon: <AutoIcon /> }, { name: "Ноль", icon: <ZeroIcon /> },
  null,
  { name: "Фильтр", icon: <FilterIcon /> }, { name: "Таблица", icon: <TableIcon /> }, { name: "Разделить", icon: <SplitIcon /> },
  { name: "Метка", icon: <FlagIcon /> }, { name: "Список", icon: <ChecklistIcon /> },
  null,
];

export default function App() {
  return (
    <Page>
      <GlobalStyle />
      <Window>
        <MenuBar>
          <Menu>
            {["Файл", "Сервис", "Окна", "Помощь"].map((m) => <MenuItem key={m}>{m}</MenuItem>)}
          </Menu>
          <Order>
            <OrderLabel htmlFor="order">Порядок работы цилиндров</OrderLabel>
            <SelectBox $w={98} $h={21} $framed>
              <select id="order"><option>1-3-4-2</option></select>
              <Down />
            </SelectBox>
            <Spinner>
              <input aria-label="Цилиндр" defaultValue="1" />
              <SpinButtons>
                <button aria-label="Больше"><Up /></button>
                <button aria-label="Меньше"><Down /></button>
              </SpinButtons>
            </Spinner>
          </Order>
        </MenuBar>

        <Tabs role="tablist">
          {TABS.map(([t, w], i) => (
            <Tab key={t} role="tab" $w={w} $active={i === 0} aria-selected={i === 0}>{t}</Tab>
          ))}
        </Tabs>

        <Frame>
          <Toolbar role="toolbar">
            {TOOLS.map((t, i) =>
              t ? (
                <ToolButton key={i} aria-label={t.name} $pressed={t.pressed}>{t.icon}</ToolButton>
              ) : (
                <Separator key={i} />
              ),
            )}
            <TestButton>
              <TestIcon />
              <span>Выбор теста</span>
              <Down />
            </TestButton>
            <Separator />
          </Toolbar>

          <Scope />

          <NavRow>
            <NavButton $w={16} aria-label="Уменьшить развёртку">
              <svg width="13" height="13" fill="none"><circle cx="6.500" cy="6.500" r="5.500" fill="#fff" stroke="#000" /><path d="M3.500 6.500h6" stroke="#000080" strokeWidth="2" /></svg>
            </NavButton>
            <SelectBox $w={67} $h={17}>
              <select aria-label="Развёртка"><option>1 сек</option></select>
              <Down />
            </SelectBox>
            <NavButton $w={16} aria-label="Увеличить развёртку">
              <svg width="13" height="13" fill="none"><circle cx="6.500" cy="6.500" r="5.500" fill="#fff" stroke="#000" /><path d="M3.500 6.500h6M6.500 3.500v6" stroke="#800000" strokeWidth="2" /></svg>
            </NavButton>
            <SelectBox $w={64} $h={17}>
              <select aria-label="Масштаб"><option>50</option></select>
              <Down />
            </SelectBox>
            <NavButton $w={23} aria-label="В начало">
              <svg width="11" height="7"><path d="M0 0h2v7H0zM10 0v7L3 3.500z" /></svg>
            </NavButton>
            <NavButton $w={17} aria-label="Назад">
              <svg width="4" height="8"><path d="M4 0v8L0 4z" /></svg>
            </NavButton>
            <Track><NavButton $w={17} aria-label="Положение" /></Track>
            <NavButton $w={17} aria-label="Вперёд">
              <svg width="4" height="8"><path d="M0 0v8l4-4z" /></svg>
            </NavButton>
            <NavButton $w={23} aria-label="В конец">
              <svg width="11" height="7"><path d="M9 0h1v7H9zM0 0v7l8-3.500z" /></svg>
            </NavButton>
            <NavButton $w={24} aria-label="Воспроизвести">
              <svg width="9" height="8"><path d="M0 0v8l9-4z" fill="#00f" /></svg>
            </NavButton>
          </NavRow>

          <SplitterRow>
            <Splitter aria-label="Свернуть панель">
              <Down fill="#3399ff" /><i /><Down fill="#3399ff" />
            </Splitter>
          </SplitterRow>

          <Controls>
            <ChannelGroup $w={303}>
              <ChannelSide>
                <ChannelTabs>
                  {CHANNEL_BUTTONS.map((c) => (
                    <ChannelButton key={c.t} $from={c.from} $to={c.to} $wide={c.wide} $off={c.off}>{c.t}</ChannelButton>
                  ))}
                </ChannelTabs>
                <NameRow>
                  <NameField>
                    <input aria-label="Имя канала" defaultValue="канал № 3" />
                    <NavButton $w={17} aria-label="Выбрать имя">
                      <svg width="8" height="14"><path d="M0 6h2v2H0zM3 6h2v2H3zM6 6h2v2H6z" /></svg>
                    </NavButton>
                  </NameField>
                  <SensorIcon />
                </NameRow>
                <SmallTools>
                  <ToolButton $size={24} $pressed aria-label="Видимость"><EyeIcon /></ToolButton>
                  <ToolButton $size={24} aria-label="Сглаживание"><SmoothIcon /></ToolButton>
                  <ToolButton $size={24} aria-label="Сдвиг"><MoveIcon /></ToolButton>
                  <ToolButton $size={24} $pressed aria-label="Сетка"><LinesIcon /></ToolButton>
                  <ToolButton $size={24} aria-label="Функция"><FxIcon /></ToolButton>
                  <ToolButton $size={24} aria-label="Настройка"><ToolsIcon /></ToolButton>
                </SmallTools>
              </ChannelSide>
              <Dial width={94} cx={45} title="Предел измерения" value="20В" ticks={46} ring={24} marks={VOLT_MARKS} />
            </ChannelGroup>

            <Group $w={105}>
              <GroupTitle>Частота</GroupTitle>
              <Dial width={103} cx={48} title="Частота" value="160K" ticks={16} ring={23} marks={FREQ_MARKS} />
            </Group>

            <Group $w={124}>
              <GroupTitle $color="#808080">Синхронизация</GroupTitle>
              <SyncGrid>
                <ToolButton $size={24} disabled aria-label="По уровню"><SyncSineIcon /></ToolButton>
                <ToolButton $size={24} disabled aria-label="По фронту"><SyncRiseIcon /></ToolButton>
                <ToolButton $size={24} disabled $pressed aria-label="По спаду"><SyncFallIcon /></ToolButton>
                <ToolButton $size={24} disabled aria-label="Вручную"><SyncHandIcon /></ToolButton>
                <SyncSelect>
                  <SelectBox $w={47} $h={22} $framed $muted>
                    <select aria-label="Канал синхронизации"><option>2</option></select>
                    <Down fill={grey} />
                  </SelectBox>
                </SyncSelect>
                <ToolButton $size={24} disabled aria-label="Окно"><SyncLevelIcon /></ToolButton>
                <ToolButton $size={24} disabled $pressed aria-label="Центр"><SyncMeetIcon /></ToolButton>
              </SyncGrid>
            </Group>

            <Group $w={175}>
              <GroupTitle $color="#99b4d1">Управление</GroupTitle>
              <ControlGrid>
                <PushButton $flat $edge="#c0c0c0" disabled aria-label="Пауза">
                  <svg width="12" height="16" fill="#c8c8c8" stroke="#808080"><path d="M.500 1.500h4v13h-4zM7.500 1.500h4v13h-4z" /></svg>
                </PushButton>
                <PushButton aria-label="Однократный режим">
                  <svg width="30" height="20" fill="none" stroke="#f00"><path d="M1 10C6-2 10-2 15 10s9 12 14 0" /></svg>
                </PushButton>
                <PushButton $edge="#ff0000" aria-label="Непрерывный режим">
                  <svg width="34" height="20" fill="none">
                    <path d="M1 3l2 4 2-2 2 2 2-4 2 4 2-2 2 2 2-4 2 4 2-2 2 2 2-4 2 4 2-2h3" stroke="#f00" />
                    <path d="M1 15h3l2-3 2 5 2-2 2 1 2-4 2 5 2-2 2 1 2-4 2 5 2-2 2 1 3-1" stroke="#00f" />
                    <path d="M33 2v6l-4-3zM33 12v6l-4-3z" fill="#000080" />
                  </svg>
                </PushButton>
                <PushButton aria-label="Авто предел">
                  <svg width="26" height="24" fill="none" stroke="#000">
                    <Tiny x={13} y={7}>AUTO</Tiny>
                    <path d="M5 9.500h16" stroke="#00f" strokeWidth="1.500" />
                    <path d="M4 12l1-4 3 3zM22 12l-1-4-3 3z" fill="#00f" stroke="none" />
                    <circle cx="13" cy="16.500" r="6" fill="#fff" strokeDasharray="2 1" />
                    <circle cx="13" cy="16.500" r="4.500" />
                    <path d="M11 14.500l2 4 2-4" stroke="#00f" />
                  </svg>
                </PushButton>
                <PushButton $span={2}>
                  <svg width="11" height="20"><path d="M.500 1v18L10.500 10z" fill="#00ff00" stroke="#00a000" /></svg>
                  <StartLabel>Пуск</StartLabel>
                </PushButton>
                <Rate>40.63</Rate>
                <PushButton aria-label="Авто запуск">
                  <svg width="26" height="24" fill="none" stroke="#000">
                    <Tiny x={13} y={7}>AUTO</Tiny>
                    <path d="M8 20c5 1 3-11 8-11 3 0 1 9 5 10" stroke="#800000" />
                    <path d="M5 14.500h14" strokeDasharray="1 1" />
                    <path d="M4 11v7l5-3.500z" fill="#00f" stroke="none" />
                    <path d="M17.500 10.500v9l5-4.500z" fill="#00e000" />
                  </svg>
                </PushButton>
              </ControlGrid>
            </Group>

            <Group $w={68}>
              <GroupTitle>Таймеры</GroupTitle>
              <TimerStack>
                <PushButton aria-label="Таймер запуска"><Clock arrow="in" /><Down /></PushButton>
                <PushButton aria-label="Таймер остановки"><Clock arrow="out" /><Down /></PushButton>
              </TimerStack>
            </Group>
          </Controls>
        </Frame>

        <StatusBar>
          <StatusPane $w={190}>{"USB Осциллограф  2.01.4216"}</StatusPane>
          <StatusPane />
          <StatusPane $w={48}>1.9</StatusPane>
        </StatusBar>
      </Window>
      <SiteLink href="http://diamag-osc.com">http://diamag-osc.com</SiteLink>
    </Page>
  );
}
